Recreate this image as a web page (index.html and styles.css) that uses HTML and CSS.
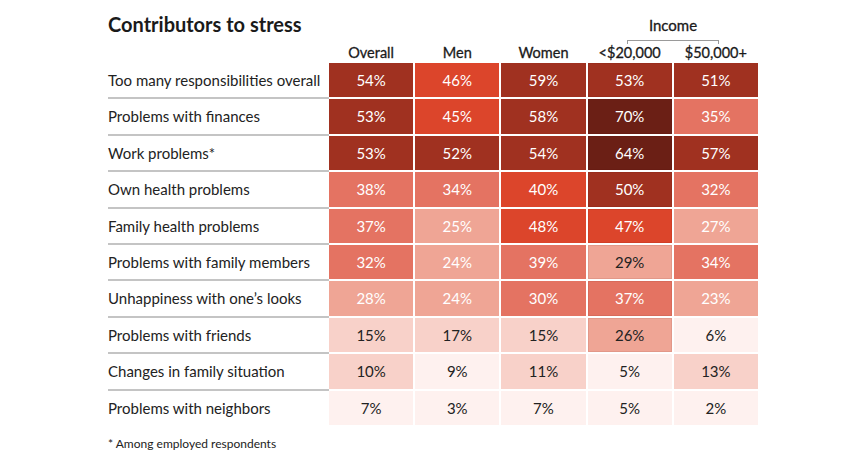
FILE: index.html
```html
<!DOCTYPE html>
<html>
<head>
<meta charset="utf-8">
<link rel="stylesheet" href="styles.css">
</head>
<body>
<div class="chart">
  <div class="top">
    <h1 class="title">Contributors to stress</h1>
    <div class="income">
      <div class="income-label">Income</div>
      <div class="bracket"></div>
    </div>
  </div>
  <div class="head">
    <div class="head-spacer"></div>
    <div class="cols">
      <div class="col-h">Overall</div>
      <div class="col-h">Men</div>
      <div class="col-h">Women</div>
      <div class="col-h">&lt;$20,000</div>
      <div class="col-h">$50,000+</div>
    </div>
  </div>
  <div class="rows">
    <div class="row"><div class="label">Too many responsibilities overall</div><div class="cols"><div class="cell c5">54%</div><div class="cell c4">46%</div><div class="cell c5">59%</div><div class="cell c5 low">53%</div><div class="cell c5">51%</div></div></div>
    <div class="row"><div class="label">Problems with finances</div><div class="cols"><div class="cell c5">53%</div><div class="cell c4">45%</div><div class="cell c5">58%</div><div class="cell c6 low">70%</div><div class="cell c3">35%</div></div></div>
    <div class="row"><div class="label">Work problems*</div><div class="cols"><div class="cell c5">53%</div><div class="cell c5">52%</div><div class="cell c5">54%</div><div class="cell c6 low">64%</div><div class="cell c5">57%</div></div></div>
    <div class="row"><div class="label">Own health problems</div><div class="cols"><div class="cell c3">38%</div><div class="cell c3">34%</div><div class="cell c4">40%</div><div class="cell c5 low">50%</div><div class="cell c3">32%</div></div></div>
    <div class="row"><div class="label">Family health problems</div><div class="cols"><div class="cell c3">37%</div><div class="cell c2">25%</div><div class="cell c4">48%</div><div class="cell c4 low">47%</div><div class="cell c2">27%</div></div></div>
    <div class="row"><div class="label">Problems with family members</div><div class="cols"><div class="cell c3">32%</div><div class="cell c2">24%</div><div class="cell c3">39%</div><div class="cell c2 low dark">29%</div><div class="cell c3">34%</div></div></div>
    <div class="row"><div class="label">Unhappiness with one’s looks</div><div class="cols"><div class="cell c2">28%</div><div class="cell c2">24%</div><div class="cell c3">30%</div><div class="cell c3 low">37%</div><div class="cell c2">23%</div></div></div>
    <div class="row"><div class="label">Problems with friends</div><div class="cols"><div class="cell c1">15%</div><div class="cell c1">17%</div><div class="cell c1">15%</div><div class="cell c2 low dark">26%</div><div class="cell c0">6%</div></div></div>
    <div class="row"><div class="label">Changes in family situation</div><div class="cols"><div class="cell c1">10%</div><div class="cell c0">9%</div><div class="cell c1">11%</div><div class="cell c0">5%</div><div class="cell c1">13%</div></div></div>
    <div class="row last"><div class="label">Problems with neighbors</div><div class="cols"><div class="cell c0">7%</div><div class="cell c0">3%</div><div class="cell c0">7%</div><div class="cell c0">5%</div><div class="cell c0">2%</div></div></div>
  </div>
  <div class="note">* Among employed respondents</div>
</div>
</body>
</html>
```

FILE: styles.css
```css
html, body {
  margin: 0;
  padding: 0;
  background: #ffffff;
}
body {
  font-family: Lato, "Open Sans", sans-serif;
  color: #222222;
  width: 860px;
  height: 460px;
  overflow: hidden;
}
.chart {
  padding: 12px 0 0 108px;
}
.top {
  display: flex;
  align-items: flex-start;
  height: 32px;
}
.title {
  margin: 0;
  font-size: 20px;
  font-weight: 700;
  line-height: 24px;
  color: #1a1a1a;
  width: 480px;
}
.income {
  width: 170px;
  display: flex;
  flex-direction: column;
  align-items: center;
  padding-top: 4px;
}
.income-label {
  font-size: 15px;
  line-height: 18px;
  font-weight: 400;
  color: #1a1a1a;
  -webkit-text-stroke: 0.3px #1a1a1a;
}
.bracket {
  margin-top: 6px;
  width: 90px;
  height: 3px;
  border: 1px solid #9a9a9a;
  border-bottom: none;
}
.head {
  display: flex;
  height: 19px;
}
.head-spacer {
  width: 221px;
}
.cols {
  display: grid;
  grid-template-columns: repeat(5, 84.2px);
  column-gap: 2px;
}
.col-h {
  text-align: center;
  font-size: 14.5px;
  line-height: 18px;
  font-weight: 400;
  color: #1a1a1a;
  -webkit-text-stroke: 0.3px #1a1a1a;
}
.rows {
  display: flex;
  flex-direction: column;
}
.row {
  display: flex;
  height: 36.4px;
}
.label {
  width: 221px;
  box-sizing: border-box;
  height: 36.4px;
  border-bottom: 2px solid #c4c4c4;
  font-size: 15px;
  line-height: 34.4px;
  color: #222;
}
.row.last .label {
  border-bottom: none;
}
.cell {
  height: 34.4px;
  line-height: 34.4px;
  text-align: center;
  font-size: 15px;
  color: #ffffff;
}
.cell.low {
  box-shadow: inset 0 0 0 1px rgba(80, 0, 0, 0.08);
}
.c6 { background: #6b1f15; }
.c5 { background: #a03120; }
.c4 { background: #dc452b; }
.c3 { background: #e47362; }
.c2 { background: #efa595; }
.c1 { background: #f8d1c9; color: #222; }
.c0 { background: #fef1ef; color: #222; }
.cell.dark { color: #222; }
.note {
  margin-top: 9px;
  font-size: 12px;
  line-height: 16px;
  color: #222;
}
```
